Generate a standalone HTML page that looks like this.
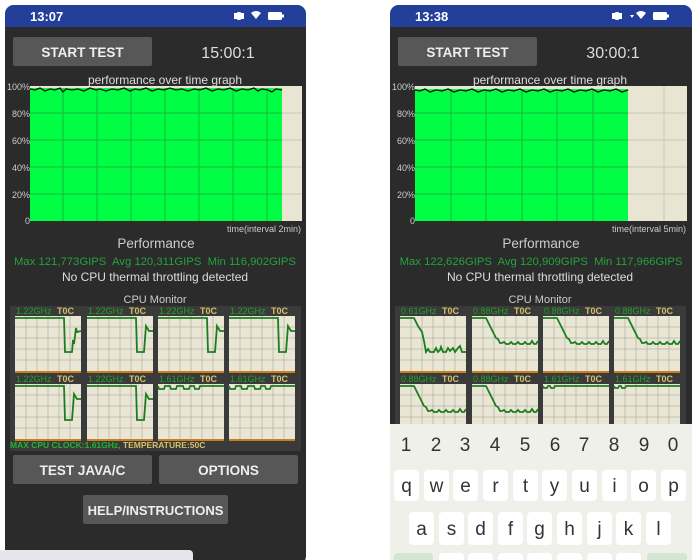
<!DOCTYPE html>
<html><head><meta charset="utf-8"><style>
html,body{margin:0;padding:0;background:#fff;width:700px;height:560px;overflow:hidden}
svg{display:block}
text{font-family:"Liberation Sans",sans-serif;white-space:pre}
</style></head><body>
<svg width="700" height="560" viewBox="0 0 700 560" xmlns="http://www.w3.org/2000/svg">
<defs>
<symbol id="cell" viewBox="0 0 66 57" width="66" height="57" overflow="visible">
<rect x="0" y="0" width="66" height="57" fill="#e9e6d5"/>
<g stroke="#b9b7a8" stroke-width="0.8">
<line x1="11" y1="0" x2="11" y2="57"/><line x1="22" y1="0" x2="22" y2="57"/><line x1="33" y1="0" x2="33" y2="57"/><line x1="44" y1="0" x2="44" y2="57"/><line x1="55" y1="0" x2="55" y2="57"/>
<line x1="0" y1="11" x2="66" y2="11"/><line x1="0" y1="22" x2="66" y2="22"/><line x1="0" y1="33" x2="66" y2="33"/><line x1="0" y1="44" x2="66" y2="44"/>
</g>
<rect x="0" y="55" width="66" height="2" fill="#c8801e"/>
</symbol>
<symbol id="lA" viewBox="0 0 66 57" width="66" height="57" overflow="visible">
<polyline fill="none" stroke="#1b7d1f" stroke-width="1.8" points="0,2 49,2 50,36 57,36 59,10 62,15 66,15"/>
</symbol>
<symbol id="lA2" viewBox="0 0 66 57" width="66" height="57" overflow="visible">
<polyline fill="none" stroke="#1b7d1f" stroke-width="1.8" points="0,2 49,2 50,36 57,36 58,24 59,28 61,12 62,16 66,15"/>
</symbol>
<symbol id="lB" viewBox="0 0 66 57" width="66" height="57" overflow="visible">
<polyline fill="none" stroke="#1b7d1f" stroke-width="1.8" points="0,2 1,5 6,5 7,2 12,2 13,5 18,5 19,2 25,2 26,5 31,5 32,2 36,2 37,5 41,5 42,2 66,2"/>
</symbol>
<symbol id="lC" viewBox="0 0 66 57" width="66" height="57" overflow="visible">
<polyline fill="none" stroke="#1b7d1f" stroke-width="1.8" points="0,2 14,2 18,10 21,16 24,22 26,23 28,27 30,27 32,26 34,28 37,28 39,26 41,28 44,28 46,26 48,28 51,28 53,26 55,28 58,28 60,25 62,28 64,28 66,25"/>
</symbol>
<symbol id="lC1" viewBox="0 0 66 57" width="66" height="57" overflow="visible">
<polyline fill="none" stroke="#1b7d1f" stroke-width="1.8" points="0,2 14,2 18,10 22,16 24,25 26,36 28,33 30,36 34,36 36,32 38,36 40,34 41,31 43,36 46,36 48,32 50,35 53,32 55,36 58,32 60,30 62,36 66,36"/>
</symbol>
<symbol id="lD" viewBox="0 0 66 57" width="66" height="57" overflow="visible">
<polyline fill="none" stroke="#1b7d1f" stroke-width="1.8" points="0,2 1,4 4,4 5,2 7,2 8,4 11,4 12,2 66,2"/>
</symbol>
</defs>

<!-- LEFT PHONE -->
<rect x="5" y="5" width="301" height="560" rx="9" fill="#2b2b2b"/>
<path d="M5,27 V14 a9,9 0 0 1 9,-9 H297 a9,9 0 0 1 9,9 V27 Z" fill="#233f9a"/>
<text x="30" y="21" font-size="13" fill="#fff" font-weight="bold">13:07</text>
<circle cx="239" cy="16" r="4" fill="#fff"/><rect x="234" y="13" width="2" height="6" fill="#fff"/><rect x="242" y="13" width="2" height="6" fill="#fff"/>
<path d="M251,13 q5,-4 10,0 l-5,6 z" fill="#fff"/>
<rect x="268" y="12" width="14" height="8" rx="1.5" fill="#fff"/><rect x="282" y="14.5" width="2" height="3" fill="#fff"/>

<rect x="13" y="37" width="139" height="29" rx="2" fill="#575757"/>
<text x="82.5" y="57" font-size="13.5" fill="#eee" text-anchor="middle" font-weight="bold">START TEST</text>
<text x="228" y="58" font-size="16" fill="#ddd" text-anchor="middle">15:00:1</text>
<text x="165" y="84" font-size="12" fill="#ddd" text-anchor="middle">performance over time graph</text>

<rect x="30" y="86" width="272" height="135" fill="#e8e5d3"/>
<rect x="30" y="88" width="252" height="133" fill="#00ff44"/>
<g stroke="#19b53a" stroke-width="1">
<line x1="63" y1="88" x2="63" y2="221"/><line x1="97" y1="88" x2="97" y2="221"/><line x1="131" y1="88" x2="131" y2="221"/><line x1="165" y1="88" x2="165" y2="221"/><line x1="199" y1="88" x2="199" y2="221"/><line x1="233" y1="88" x2="233" y2="221"/><line x1="267" y1="88" x2="267" y2="221"/>
<line x1="30" y1="113" x2="282" y2="113"/><line x1="30" y1="140" x2="282" y2="140"/><line x1="30" y1="167" x2="282" y2="167"/><line x1="30" y1="194" x2="282" y2="194"/>
</g>
<g stroke="#c9c7b8" stroke-width="1"><line x1="282" y1="113" x2="302" y2="113"/><line x1="282" y1="140" x2="302" y2="140"/><line x1="282" y1="167" x2="302" y2="167"/><line x1="282" y1="194" x2="302" y2="194"/></g>
<polyline fill="none" stroke="#111" stroke-width="1.3" points="30,89 35,90 40,88 45,91 50,89 55,90 60,88 63,92 66,89 72,90 78,89 84,91 90,88 96,90 100,89 106,91 112,89 118,90 124,88 130,91 135,89 140,90 146,88 152,91 158,89 164,90 170,88 176,90 182,89 188,91 194,89 200,90 206,88 212,91 218,89 224,90 230,88 236,91 242,89 248,90 254,88 258,91 262,89 268,90 272,92 276,89 282,90"/>
<g font-size="9" fill="#ccc" text-anchor="end">
<text x="30" y="90">100%</text><text x="30" y="117">80%</text><text x="30" y="144">60%</text><text x="30" y="171">40%</text><text x="30" y="198">20%</text><text x="30" y="224">0</text></g>
<text x="301" y="232" font-size="9" fill="#ccc" text-anchor="end">time(interval 2min)</text>
<text x="156" y="248" font-size="13.5" fill="#ccc" text-anchor="middle">Performance</text>
<text x="155" y="265" font-size="11.3" fill="#23a33a" text-anchor="middle">Max 121,773GIPS  Avg 120,311GIPS  Min 116,902GIPS</text>
<text x="155" y="281" font-size="12" fill="#ddd" text-anchor="middle">No CPU thermal throttling detected</text>

<text x="155" y="303" font-size="11" fill="#ccc" text-anchor="middle">CPU Monitor</text>
<rect x="10" y="306" width="291" height="145" fill="#3a3a3a"/>
<g font-size="9">
<text x="16" y="314" fill="#22a02a">1.22GHz</text><text x="57" y="314" fill="#d6c16a" font-weight="bold">T0C</text>
<text x="88" y="314" fill="#22a02a">1.22GHz</text><text x="129" y="314" fill="#d6c16a" font-weight="bold">T0C</text>
<text x="159" y="314" fill="#22a02a">1.22GHz</text><text x="200" y="314" fill="#d6c16a" font-weight="bold">T0C</text>
<text x="230" y="314" fill="#22a02a">1.22GHz</text><text x="271" y="314" fill="#d6c16a" font-weight="bold">T0C</text>
<text x="16" y="382" fill="#22a02a">1.22GHz</text><text x="57" y="382" fill="#d6c16a" font-weight="bold">T0C</text>
<text x="88" y="382" fill="#22a02a">1.22GHz</text><text x="129" y="382" fill="#d6c16a" font-weight="bold">T0C</text>
<text x="159" y="382" fill="#22a02a">1.61GHz</text><text x="200" y="382" fill="#d6c16a" font-weight="bold">T0C</text>
<text x="230" y="382" fill="#22a02a">1.61GHz</text><text x="271" y="382" fill="#d6c16a" font-weight="bold">T0C</text>
</g>
<use href="#cell" x="15" y="316"/><use href="#cell" x="87" y="316"/><use href="#cell" x="158" y="316"/><use href="#cell" x="229" y="316"/>
<use href="#cell" x="15" y="384"/><use href="#cell" x="87" y="384"/><use href="#cell" x="158" y="384"/><use href="#cell" x="229" y="384"/>
<use href="#lA2" x="15" y="316"/><use href="#lA" x="87" y="316"/><use href="#lA" x="158" y="316"/><use href="#lA" x="229" y="316"/>
<use href="#lA" x="15" y="384"/><use href="#lA" x="87" y="384"/><use href="#lB" x="158" y="384"/><use href="#lB" x="229" y="384"/>
<text x="10" y="448" font-size="8.5" fill="#1fb52f" font-weight="bold">MAX CPU CLOCK:1.61GHz, <tspan fill="#d6c16a">TEMPERATURE:50C</tspan></text>

<rect x="13" y="455" width="139" height="29" rx="2" fill="#575757"/>
<text x="82.5" y="475" font-size="13.5" fill="#eee" text-anchor="middle" font-weight="bold">TEST JAVA/C</text>
<rect x="159" y="455" width="139" height="29" rx="2" fill="#575757"/>
<text x="228.5" y="475" font-size="13.5" fill="#eee" text-anchor="middle" font-weight="bold">OPTIONS</text>
<rect x="83" y="495" width="145" height="29" rx="2" fill="#575757"/>
<text x="155.5" y="515" font-size="13" fill="#eee" text-anchor="middle" font-weight="bold">HELP/INSTRUCTIONS</text>
<path d="M0,560 V550 H189 a4,4 0 0 1 4,4 V560 Z" fill="#e4e6e9"/>

<!-- RIGHT PHONE -->
<rect x="390" y="5" width="302" height="560" rx="9" fill="#2b2b2b"/>
<path d="M390,27 V14 a9,9 0 0 1 9,-9 H683 a9,9 0 0 1 9,9 V27 Z" fill="#233f9a"/>
<text x="415" y="21" font-size="13" fill="#fff" font-weight="bold">13:38</text>
<circle cx="617" cy="16" r="4" fill="#fff"/><rect x="612" y="13" width="2" height="6" fill="#fff"/><rect x="620" y="13" width="2" height="6" fill="#fff"/>
<path d="M630,15 h4 l-2,3 z" fill="#fff"/>
<path d="M636,13 q5,-4 10,0 l-5,6 z" fill="#fff"/>
<rect x="653" y="12" width="14" height="8" rx="1.5" fill="#fff"/><rect x="667" y="14.5" width="2" height="3" fill="#fff"/>

<rect x="398" y="37" width="139" height="29" rx="2" fill="#575757"/>
<text x="467.5" y="57" font-size="13.5" fill="#eee" text-anchor="middle" font-weight="bold">START TEST</text>
<text x="613" y="58" font-size="16" fill="#ddd" text-anchor="middle">30:00:1</text>
<text x="550" y="84" font-size="12" fill="#ddd" text-anchor="middle">performance over time graph</text>

<rect x="415" y="86" width="272" height="135" fill="#e8e5d3"/>
<rect x="415" y="89" width="213" height="132" fill="#00ff44"/>
<g stroke="#19b53a" stroke-width="1">
<line x1="451" y1="89" x2="451" y2="221"/><line x1="486" y1="89" x2="486" y2="221"/><line x1="522" y1="89" x2="522" y2="221"/><line x1="557" y1="89" x2="557" y2="221"/><line x1="593" y1="89" x2="593" y2="221"/>
<line x1="415" y1="113" x2="628" y2="113"/><line x1="415" y1="140" x2="628" y2="140"/><line x1="415" y1="167" x2="628" y2="167"/><line x1="415" y1="194" x2="628" y2="194"/>
</g>
<g stroke="#c9c7b8" stroke-width="1"><line x1="664" y1="86" x2="664" y2="221"/><line x1="628" y1="113" x2="687" y2="113"/><line x1="628" y1="140" x2="687" y2="140"/><line x1="628" y1="167" x2="687" y2="167"/><line x1="628" y1="194" x2="687" y2="194"/></g>
<polyline fill="none" stroke="#111" stroke-width="1.3" points="415,90 420,91 425,89 430,92 436,90 442,91 448,89 454,92 460,90 466,91 472,89 478,92 484,90 490,91 496,89 502,92 508,90 514,91 520,89 526,92 532,90 538,91 544,89 550,92 556,90 562,91 568,89 574,92 580,90 586,91 592,89 598,92 604,90 610,91 616,89 622,92 628,90"/>
<g font-size="9" fill="#ccc" text-anchor="end">
<text x="415" y="90">100%</text><text x="415" y="117">80%</text><text x="415" y="144">60%</text><text x="415" y="171">40%</text><text x="415" y="198">20%</text><text x="415" y="224">0</text></g>
<text x="686" y="232" font-size="9" fill="#ccc" text-anchor="end">time(interval 5min)</text>
<text x="541" y="248" font-size="13.5" fill="#ccc" text-anchor="middle">Performance</text>
<text x="541" y="265" font-size="11.3" fill="#23a33a" text-anchor="middle">Max 122,626GIPS  Avg 120,909GIPS  Min 117,966GIPS</text>
<text x="540" y="281" font-size="12" fill="#ddd" text-anchor="middle">No CPU thermal throttling detected</text>

<text x="540" y="303" font-size="11" fill="#ccc" text-anchor="middle">CPU Monitor</text>
<rect x="395" y="306" width="291" height="120" fill="#3a3a3a"/>
<g font-size="9">
<text x="401" y="314" fill="#22a02a">0.61GHz</text><text x="442" y="314" fill="#d6c16a" font-weight="bold">T0C</text>
<text x="473" y="314" fill="#22a02a">0.88GHz</text><text x="514" y="314" fill="#d6c16a" font-weight="bold">T0C</text>
<text x="544" y="314" fill="#22a02a">0.88GHz</text><text x="585" y="314" fill="#d6c16a" font-weight="bold">T0C</text>
<text x="615" y="314" fill="#22a02a">0.88GHz</text><text x="656" y="314" fill="#d6c16a" font-weight="bold">T0C</text>
<text x="401" y="382" fill="#22a02a">0.88GHz</text><text x="442" y="382" fill="#d6c16a" font-weight="bold">T0C</text>
<text x="473" y="382" fill="#22a02a">0.88GHz</text><text x="514" y="382" fill="#d6c16a" font-weight="bold">T0C</text>
<text x="544" y="382" fill="#22a02a">1.61GHz</text><text x="585" y="382" fill="#d6c16a" font-weight="bold">T0C</text>
<text x="615" y="382" fill="#22a02a">1.61GHz</text><text x="656" y="382" fill="#d6c16a" font-weight="bold">T0C</text>
</g>
<use href="#cell" x="400" y="316"/><use href="#cell" x="472" y="316"/><use href="#cell" x="543" y="316"/><use href="#cell" x="614" y="316"/>
<use href="#cell" x="400" y="384"/><use href="#cell" x="472" y="384"/><use href="#cell" x="543" y="384"/><use href="#cell" x="614" y="384"/>
<use href="#lC1" x="400" y="316"/><use href="#lC" x="472" y="316"/><use href="#lC" x="543" y="316"/><use href="#lC" x="614" y="316"/>
<use href="#lC" x="400" y="384"/><use href="#lC" x="472" y="384"/><use href="#lD" x="543" y="384"/><use href="#lD" x="614" y="384"/>

<!-- keyboard -->
<rect x="390" y="424" width="302" height="136" fill="#eef0e9"/>
<g font-size="19" fill="#333" text-anchor="middle">
<text x="406" y="451">1</text><text x="436" y="451">2</text><text x="465" y="451">3</text><text x="495" y="451">4</text><text x="525" y="451">5</text><text x="555" y="451">6</text><text x="584" y="451">7</text><text x="614" y="451">8</text><text x="644" y="451">9</text><text x="673" y="451">0</text>
</g>
<g fill="#fff">
<rect x="394" y="470" width="25" height="31" rx="4"/><rect x="424" y="470" width="25" height="31" rx="4"/><rect x="453" y="470" width="25" height="31" rx="4"/><rect x="483" y="470" width="25" height="31" rx="4"/><rect x="513" y="470" width="25" height="31" rx="4"/><rect x="542" y="470" width="25" height="31" rx="4"/><rect x="572" y="470" width="25" height="31" rx="4"/><rect x="602" y="470" width="25" height="31" rx="4"/><rect x="631" y="470" width="25" height="31" rx="4"/><rect x="661" y="470" width="25" height="31" rx="4"/>
<rect x="409" y="512" width="25" height="33" rx="4"/><rect x="439" y="512" width="25" height="33" rx="4"/><rect x="468" y="512" width="25" height="33" rx="4"/><rect x="498" y="512" width="25" height="33" rx="4"/><rect x="527" y="512" width="25" height="33" rx="4"/><rect x="557" y="512" width="25" height="33" rx="4"/><rect x="587" y="512" width="25" height="33" rx="4"/><rect x="616" y="512" width="25" height="33" rx="4"/><rect x="646" y="512" width="25" height="33" rx="4"/>
<rect x="439" y="553" width="25" height="10" rx="4"/><rect x="468" y="553" width="25" height="10" rx="4"/><rect x="498" y="553" width="25" height="10" rx="4"/><rect x="527" y="553" width="25" height="10" rx="4"/><rect x="557" y="553" width="25" height="10" rx="4"/><rect x="587" y="553" width="25" height="10" rx="4"/><rect x="616" y="553" width="25" height="10" rx="4"/>
</g>
<rect x="394" y="553" width="39" height="10" rx="4" fill="#d3e6d2"/><rect x="647" y="553" width="40" height="10" rx="4" fill="#d3e6d2"/>
<g font-size="19" fill="#333" text-anchor="middle">
<text x="406.5" y="492">q</text><text x="436.5" y="492">w</text><text x="465.5" y="492">e</text><text x="495.5" y="492">r</text><text x="525.5" y="492">t</text><text x="554.5" y="492">y</text><text x="584.5" y="492">u</text><text x="614.5" y="492">i</text><text x="643.5" y="492">o</text><text x="673.5" y="492">p</text>
<text x="421.5" y="535">a</text><text x="451.5" y="535">s</text><text x="480.5" y="535">d</text><text x="510.5" y="535">f</text><text x="539.5" y="535">g</text><text x="569.5" y="535">h</text><text x="599.5" y="535">j</text><text x="628.5" y="535">k</text><text x="658.5" y="535">l</text>
</g>
</svg>
</body></html>
